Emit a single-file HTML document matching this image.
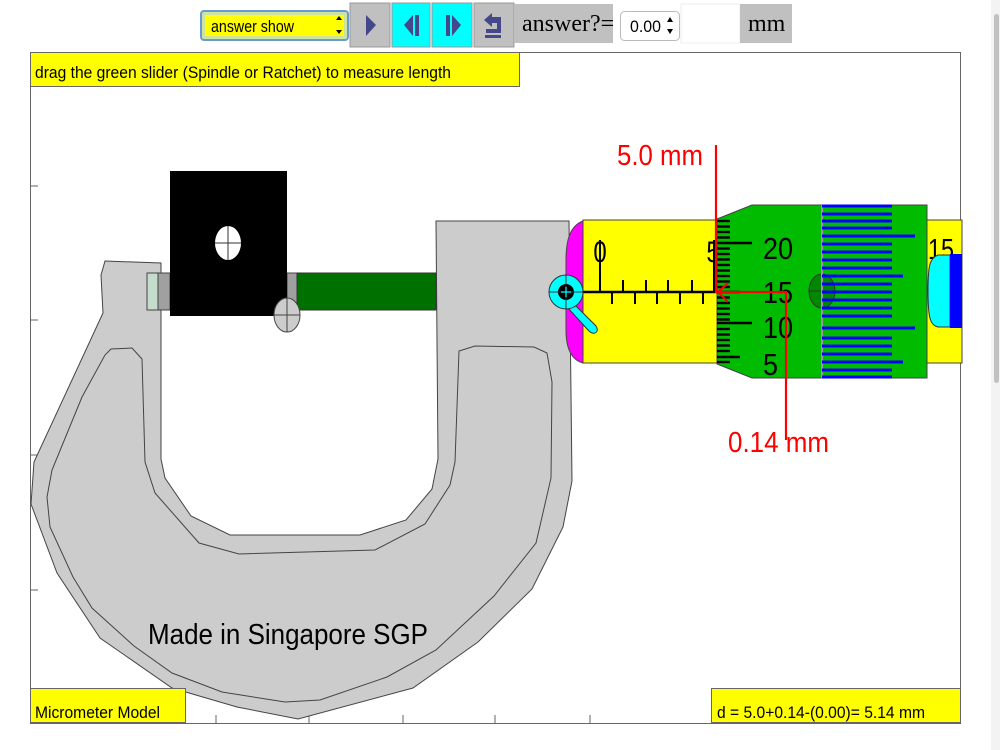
<!DOCTYPE html>
<html><head><meta charset="utf-8"><style>
html,body{margin:0;padding:0;background:#fff;width:1000px;height:750px;overflow:hidden;font-family:"Liberation Sans",sans-serif}
svg{position:absolute;left:0;top:0}
</style></head><body>
<svg width="1000" height="750" viewBox="0 0 1000 750" xmlns="http://www.w3.org/2000/svg" font-family="Liberation Sans, sans-serif">
<rect x="991" y="0" width="9" height="750" fill="#f3f3f3"/>
<rect x="994" y="14" width="5" height="369" rx="2.5" fill="#c1c1c1"/>
<rect x="30.5" y="52.5" width="930" height="671" fill="none" stroke="#666" stroke-width="1"/>
<g stroke="#666">
<line x1="30" y1="186" x2="38" y2="186"/><line x1="30" y1="320" x2="38" y2="320"/><line x1="30" y1="455" x2="38" y2="455"/><line x1="30" y1="590" x2="38" y2="590"/>
<line x1="216" y1="715" x2="216" y2="723"/><line x1="309" y1="715" x2="309" y2="723"/><line x1="403" y1="715" x2="403" y2="723"/><line x1="495" y1="715" x2="495" y2="723"/><line x1="590" y1="715" x2="590" y2="723"/>
</g>
<path d="M105,261 L161,263 L161,459 L165,478 L191,516 L230,535 L360,535 L406,520 L432,489 L438,459 L436,221 L569,221 L572,481 L563,527 L532,589 L478,642 L413,688 L298,719 L237,707 L172,688 L100,638 L57,573 L31,504 L34,462 L103,313 L101,275 Z" fill="#cccccc" stroke="#444" stroke-width="1"/>
<path d="M111,349 L132,348 L142,359 L145,462 L155,493 L199,543 L239,554 L375,550 L425,524 L450,485 L455,462 L459,351 L475,346 L534,347 L547,353 L552,382 L551,478 L536,543 L494,596 L436,650 L387,677 L320,700 L285,702 L222,692 L172,673 L134,646 L92,608 L73,577 L50,527 L47,497 L52,470 L82,397 L105,355 Z" fill="none" stroke="#444" stroke-width="1"/>
<rect x="147" y="273" width="11" height="37" fill="#c4dccc" stroke="#444"/>
<rect x="158" y="273" width="12" height="37" fill="#a0a0a0" stroke="#444"/>
<rect x="287" y="273" width="10" height="37" fill="#a0a0a0" stroke="#444"/>
<rect x="297" y="273" width="139" height="37" fill="#007000" stroke="#333"/>
<rect x="170" y="171" width="117" height="145" fill="#000"/>
<ellipse cx="228" cy="243" rx="13" ry="17" fill="#fff"/>
<path d="M215,243h26M228,226v34" stroke="#333" stroke-width="1"/>
<ellipse cx="287" cy="315" rx="13" ry="17" fill="#ccc" stroke="#444"/>
<path d="M274,315h26M287,298v34" stroke="#444" stroke-width="1"/>
<path d="M583,221 C570,226 566,240 566,260 L566,330 C566,350 572,360 583,363 Z" fill="#ff00ff" stroke="#444"/>
<rect x="583" y="220" width="135" height="143" fill="#ffff00" stroke="#444"/>
<rect x="927" y="220" width="35" height="143" fill="#ffff00" stroke="#444"/>
<path d="M583,292H717" stroke="#000" stroke-width="2.5"/>
<g stroke="#000" stroke-width="2">
<line x1="600" y1="240" x2="600" y2="292"/><line x1="623" y1="280" x2="623" y2="292"/><line x1="646" y1="280" x2="646" y2="292"/><line x1="668" y1="280" x2="668" y2="292"/><line x1="692" y1="280" x2="692" y2="292"/><line x1="714" y1="240" x2="714" y2="292"/>
<line x1="612" y1="292" x2="612" y2="304"/><line x1="635" y1="292" x2="635" y2="304"/><line x1="657" y1="292" x2="657" y2="304"/><line x1="680" y1="292" x2="680" y2="304"/><line x1="703" y1="292" x2="703" y2="304"/>
</g>
<text x="600" y="262" font-size="30" text-anchor="middle" transform="translate(600 0) scale(0.8 1) translate(-600 0)">0</text>
<text x="713" y="262" font-size="30" text-anchor="middle" transform="translate(713 0) scale(0.8 1) translate(-713 0)">5</text>
<path d="M572,302 L596,326 C600,332 594,336 589,331 L566,306 Z" fill="#00ffff" stroke="#333"/>
<circle cx="566" cy="292" r="17" fill="#00ffff" stroke="#333"/>
<circle cx="566" cy="292" r="8" fill="#000"/>
<path d="M549,292h34M566,275v34" stroke="#333" stroke-width="1"/>
<path d="M561,292h10M566,287v10" stroke="#00ffff" stroke-width="1.2"/>
<path d="M717,219 L752,205 L927,205 L927,378 L752,378 L717,364 Z" fill="#00bb00" stroke="#444"/>
<g stroke="#000" stroke-width="2.4">
<line x1="717" y1="221" x2="730" y2="221"/><line x1="717" y1="226.5" x2="730" y2="226.5"/><line x1="717" y1="232" x2="730" y2="232"/><line x1="717" y1="237.5" x2="730" y2="237.5"/><line x1="717" y1="243" x2="752" y2="243"/><line x1="717" y1="248.5" x2="730" y2="248.5"/><line x1="717" y1="254" x2="730" y2="254"/><line x1="717" y1="259.5" x2="730" y2="259.5"/><line x1="717" y1="265" x2="730" y2="265"/><line x1="717" y1="270.5" x2="730" y2="270.5"/><line x1="717" y1="276" x2="730" y2="276"/><line x1="717" y1="281.5" x2="730" y2="281.5"/><line x1="717" y1="287" x2="730" y2="287"/><line x1="717" y1="292" x2="740" y2="292"/><line x1="717" y1="297.5" x2="730" y2="297.5"/><line x1="717" y1="303" x2="730" y2="303"/><line x1="717" y1="308.5" x2="730" y2="308.5"/><line x1="717" y1="314" x2="730" y2="314"/><line x1="717" y1="319.5" x2="730" y2="319.5"/><line x1="717" y1="323" x2="752" y2="323"/><line x1="717" y1="329" x2="730" y2="329"/><line x1="717" y1="334.5" x2="730" y2="334.5"/><line x1="717" y1="340" x2="730" y2="340"/><line x1="717" y1="345.5" x2="730" y2="345.5"/><line x1="717" y1="351" x2="730" y2="351"/><line x1="717" y1="357" x2="740" y2="357"/><line x1="717" y1="362" x2="730" y2="362"/>
</g>
<g font-size="31" fill="#000">
<text x="763" y="259" textLength="30" lengthAdjust="spacingAndGlyphs">20</text><text x="763" y="303" textLength="30" lengthAdjust="spacingAndGlyphs">15</text><text x="763" y="338" textLength="30" lengthAdjust="spacingAndGlyphs">10</text><text x="763" y="375" textLength="15" lengthAdjust="spacingAndGlyphs">5</text>
</g>
<ellipse cx="822" cy="291" rx="13" ry="17" fill="#008800" stroke="#333"/>
<path d="M809,291h26" stroke="#333"/>
<line x1="822" y1="205" x2="822" y2="378" stroke="#999" stroke-width="2"/>
<g stroke="#0000ff" stroke-width="3">
<line x1="822" y1="206" x2="892" y2="206"/><line x1="822" y1="214" x2="892" y2="214"/><line x1="822" y1="221" x2="892" y2="221"/><line x1="822" y1="228" x2="892" y2="228"/><line x1="822" y1="236" x2="915" y2="236"/><line x1="822" y1="244" x2="892" y2="244"/><line x1="822" y1="252" x2="892" y2="252"/><line x1="822" y1="260" x2="892" y2="260"/><line x1="822" y1="268" x2="892" y2="268"/><line x1="822" y1="276" x2="903" y2="276"/><line x1="822" y1="284" x2="892" y2="284"/><line x1="822" y1="292" x2="892" y2="292"/><line x1="822" y1="300" x2="892" y2="300"/><line x1="822" y1="308" x2="892" y2="308"/><line x1="822" y1="316" x2="892" y2="316"/><line x1="822" y1="328" x2="915" y2="328"/><line x1="822" y1="338" x2="892" y2="338"/><line x1="822" y1="346" x2="892" y2="346"/><line x1="822" y1="354" x2="892" y2="354"/><line x1="822" y1="362" x2="903" y2="362"/><line x1="822" y1="370" x2="892" y2="370"/><line x1="822" y1="377" x2="892" y2="377"/>
</g>
<text x="928" y="259" font-size="29" textLength="26" lengthAdjust="spacingAndGlyphs">15</text>
<path d="M950,255 L938,255 C930,258 928,265 928,290 C928,318 930,325 938,327 L950,327 Z" fill="#00ffff" stroke="#333"/>
<rect x="950" y="254" width="12" height="74" fill="#0000ff"/>
<g stroke="#ff0000" stroke-width="2.2" fill="none">
<path d="M716,145V292H786V440"/>
<path d="M728,283L718,292L728,302"/>
</g>
<text x="617" y="165" font-size="29" fill="#ff0000" textLength="86" lengthAdjust="spacingAndGlyphs">5.0 mm</text>
<text x="728" y="452" font-size="29" fill="#ff0000" textLength="101" lengthAdjust="spacingAndGlyphs">0.14 mm</text>
<text x="148" y="644" font-size="29" fill="#000" textLength="280" lengthAdjust="spacingAndGlyphs">Made in Singapore SGP</text>
<rect x="30.5" y="52.5" width="489" height="34" fill="#ffff00" stroke="#666"/>
<text x="35" y="78" font-size="17" textLength="416" lengthAdjust="spacingAndGlyphs">drag the green slider (Spindle or Ratchet) to measure length</text>
<rect x="30.5" y="688.5" width="155" height="34" fill="#ffff00" stroke="#666"/>
<text x="35" y="718" font-size="17" textLength="125" lengthAdjust="spacingAndGlyphs">Micrometer Model</text>
<rect x="711.5" y="688.5" width="249" height="34" fill="#ffff00" stroke="#666"/>
<text x="717" y="718" font-size="17" textLength="208" lengthAdjust="spacingAndGlyphs">d = 5.0+0.14-(0.00)= 5.14 mm</text>
<rect x="201" y="11" width="147" height="29" rx="3" fill="#cfe3a0" stroke="#6a9ad4" stroke-width="2"/>
<rect x="205" y="15" width="139" height="21" fill="#ffff00"/>
<text x="211" y="32" font-size="17" textLength="83" lengthAdjust="spacingAndGlyphs">answer show</text>
<path d="M336,20l3,-4l3,4zM336,30l3,4l3,-4z" fill="#000"/>
<rect x="350" y="3" width="40" height="44" fill="#c0c0c0" stroke="#999"/>
<rect x="392" y="3" width="38" height="44" fill="#00ffff" stroke="#999"/>
<rect x="432" y="3" width="40" height="44" fill="#00ffff" stroke="#999"/>
<rect x="474" y="3" width="40" height="44" fill="#c0c0c0" stroke="#999"/>
<path d="M366,15L376,25L366,36Z" fill="#44488a"/>
<path d="M413,15L404,25L413,36Z M415,15h4v21h-4z" fill="#44488a"/>
<path d="M446,15h4v21h-4zM452,15L461,25L452,36Z" fill="#44488a"/>
<path d="M484,20L492,13V17H501V33H486V29H497V23H492V27Z" fill="#44488a"/>
<rect x="485" y="35" width="16" height="3" fill="#44488a"/>
<rect x="514" y="4" width="99" height="39" fill="#c0c0c0"/>
<text x="522" y="31" font-size="24" font-family="Liberation Serif, serif">answer?=</text>
<rect x="620.5" y="11.5" width="59" height="29" rx="4" fill="#fff" stroke="#bbb"/>
<text x="630" y="32" font-size="17" textLength="31" lengthAdjust="spacingAndGlyphs">0.00</text>
<path d="M667,22l3,-5l3,5zM667,29l3,5l3,-5z" fill="#000"/>
<rect x="681" y="4" width="59" height="39" fill="#fff" stroke="#eee"/>
<rect x="740" y="4" width="52" height="39" fill="#c0c0c0"/>
<text x="748" y="31" font-size="24" font-family="Liberation Serif, serif">mm</text>
</svg>
</body></html>
